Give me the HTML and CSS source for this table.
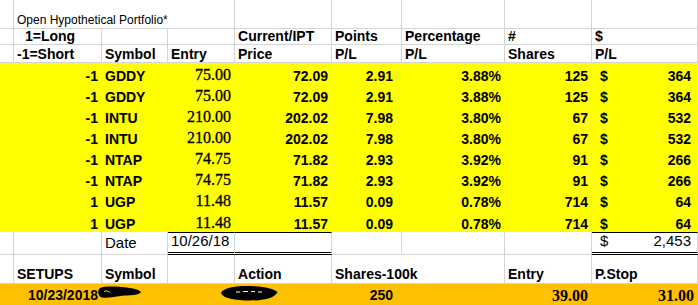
FILE: index.html
```html
<!DOCTYPE html>
<html>
<head>
    <meta charset="UTF-8">
    <title>Open Hypothetical Portfolio</title>
    <link rel="stylesheet" href="styles.css">
</head>
<body>
    <div class="page">
        <table class="sheet">
            <colgroup>
                <col class="c-a"><col class="c-b"><col class="c-c"><col class="c-d"><col class="c-e">
                <col class="c-f"><col class="c-g"><col class="c-h"><col class="c-i">
            </colgroup>
            <tr class="r-title">
                <td></td>
                <td colspan="3" class="title">Open Hypothetical Portfolio*</td>
                <td></td><td></td><td></td><td></td><td></td>
            </tr>
            <tr class="r-head1 hdr">
                <td></td>
                <td class="indent">1=Long</td>
                <td></td><td></td>
                <td>Current/IPT</td>
                <td>Points</td>
                <td>Percentage</td>
                <td>#</td>
                <td>$</td>
            </tr>
            <tr class="r-head2 hdr">
                <td></td>
                <td>-1=Short</td>
                <td>Symbol</td>
                <td>Entry</td>
                <td>Price</td>
                <td>P/L</td>
                <td>P/L</td>
                <td>Shares</td>
                <td>P/L</td>
            </tr>
            <tr class="pos">
                <td></td><td class="num">-1</td><td>GDDY</td><td class="num entry">75.00</td><td class="num">72.09</td>
                <td class="num pts">2.91</td><td class="num">3.88%</td><td class="num">125</td>
                <td class="acct"><span>$</span><span>364</span></td>
            </tr>
            <tr class="pos">
                <td></td><td class="num">-1</td><td>GDDY</td><td class="num entry">75.00</td><td class="num">72.09</td>
                <td class="num pts">2.91</td><td class="num">3.88%</td><td class="num">125</td>
                <td class="acct"><span>$</span><span>364</span></td>
            </tr>
            <tr class="pos">
                <td></td><td class="num">-1</td><td>INTU</td><td class="num entry">210.00</td><td class="num">202.02</td>
                <td class="num pts">7.98</td><td class="num">3.80%</td><td class="num">67</td>
                <td class="acct"><span>$</span><span>532</span></td>
            </tr>
            <tr class="pos">
                <td></td><td class="num">-1</td><td>INTU</td><td class="num entry">210.00</td><td class="num">202.02</td>
                <td class="num pts">7.98</td><td class="num">3.80%</td><td class="num">67</td>
                <td class="acct"><span>$</span><span>532</span></td>
            </tr>
            <tr class="pos">
                <td></td><td class="num">-1</td><td>NTAP</td><td class="num entry">74.75</td><td class="num">71.82</td>
                <td class="num pts">2.93</td><td class="num">3.92%</td><td class="num">91</td>
                <td class="acct"><span>$</span><span>266</span></td>
            </tr>
            <tr class="pos">
                <td></td><td class="num">-1</td><td>NTAP</td><td class="num entry">74.75</td><td class="num">71.82</td>
                <td class="num pts">2.93</td><td class="num">3.92%</td><td class="num">91</td>
                <td class="acct"><span>$</span><span>266</span></td>
            </tr>
            <tr class="pos">
                <td></td><td class="num">1</td><td>UGP</td><td class="num entry">11.48</td><td class="num">11.57</td>
                <td class="num pts">0.09</td><td class="num">0.78%</td><td class="num">714</td>
                <td class="acct"><span>$</span><span>64</span></td>
            </tr>
            <tr class="pos last">
                <td></td><td class="num">1</td><td>UGP</td><td class="num entry">11.48</td><td class="num">11.57</td>
                <td class="num pts">0.09</td><td class="num">0.78%</td><td class="num">714</td>
                <td class="acct"><span>$</span><span>64</span></td>
            </tr>
            <tr class="r-date">
                <td></td><td></td>
                <td class="date-label">Date</td>
                <td class="boxed">10/26/18</td>
                <td class="boxed"></td>
                <td></td><td></td><td></td>
                <td class="boxed acct total"><span>$</span><span>2,453</span></td>
            </tr>
            <tr class="r-setups hdr">
                <td></td>
                <td>SETUPS</td>
                <td>Symbol</td>
                <td></td>
                <td>Action</td>
                <td colspan="2">Shares-100k</td>
                <td>Entry</td>
                <td>P.Stop</td>
            </tr>
            <tr class="setup">
                <td></td>
                <td class="num">10/23/2018</td>
                <td></td><td></td><td></td>
                <td class="num pts">250</td>
                <td></td>
                <td class="num entry">39.00</td>
                <td class="num entry">31.00</td>
            </tr>
        </table>

        <!-- redaction marks over the setup row -->
        <svg class="scribble" width="698" height="24" viewBox="0 283 698 24">
            <path d="M100,288 C106,285.5 118,286.5 127,287.5 C134,288.5 139,289.5 141,292 C140,294.5 133,295.5 124,295.5 C115,296.5 107,298.5 102,297.5 C98,296.5 97,290.5 100,288 Z" fill="#000"/>
            <path d="M104,291.5 C106,290.5 109,291 110,292.5" stroke="#fff" stroke-width="0.8" fill="none"/>
            <path d="M221,293 C223,287.5 236,285.5 250,286 C264,286.5 274,288.5 277.5,292 C275,297.5 266,300.5 250,300.5 C235,300.5 223,298.5 221,293 Z" fill="#000"/>
            <path d="M236,292 L240,292 M243,291.5 L248,291.5 M251,291.5 L255,291.5 M258,292 L262,292" stroke="#fff" stroke-width="1" fill="none"/>
        </svg>
    </div>
</body>
</html>
```

FILE: styles.css
```css
* {
    margin: 0;
    padding: 0;
    box-sizing: border-box;
}

body {
    background: #fff;
    font-family: 'Liberation Sans', Arial, sans-serif;
    color: #000;
}

.page {
    position: relative;
    width: 698px;
    height: 305px;
    overflow: hidden;
}

.sheet {
    border-collapse: separate;
    border-spacing: 0;
    table-layout: fixed;
    width: 698px;
    font-size: 14px;
}

.c-a { width: 14px; }
.c-b { width: 88px; }
.c-c { width: 66px; }
.c-d { width: 67px; }
.c-e { width: 97px; }
.c-f { width: 70px; }
.c-g { width: 103px; }
.c-h { width: 87px; }
.c-i { width: 106px; }

.sheet td {
    border-right: 1px solid #d4d4d4;
    border-bottom: 1px solid #d4d4d4;
    padding: 0 3px 1px 3px;
    vertical-align: bottom;
    white-space: nowrap;
    overflow: visible;
    line-height: 1;
}

.hdr td {
    font-weight: 700;
}

.indent {
    padding-left: 11px !important;
}

.r-title { height: 29px; }
.r-head1 { height: 16px; }
.r-head2 { height: 18px; }
.r-date { height: 22px; }
.r-setups { height: 29px; }
.setup { height: 24px; }

.title {
    font-size: 12px;
    padding-bottom: 2px !important;
}

.r-head1 td { padding-bottom: 1px; }
.r-head2 td { padding-bottom: 1px; }

/* filled rows hide the grid */
.pos td {
    background: #ffff00;
    border-color: transparent;
    font-weight: 700;
    padding-bottom: 0;
}

.pos { height: 21px; }
.pos.last { height: 22px; }

.setup td {
    background: #ffc000;
    border-color: transparent;
    font-weight: 700;
    vertical-align: top;
    padding-top: 4px;
}

.num {
    text-align: right;
}

.pts {
    padding-right: 8px !important;
}

.entry {
    font-family: 'Liberation Serif', 'Times New Roman', serif;
    font-weight: 400 !important;
    font-size: 16px;
    -webkit-text-stroke: 0.3px #000;
}

.setup .entry {
    font-weight: 700 !important;
    -webkit-text-stroke: 0;
}

.acct span {
    display: inline-block;
}

.acct span:first-child {
    padding-left: 5px;
}

.acct span:last-child {
    float: right;
    padding-right: 3px;
}

.date-label {
    font-size: 16px;
    padding-bottom: 4px !important;
}

.r-date td {
    padding-bottom: 4px;
    font-size: 15px;
}

.total {
    font-size: 16px;
}

.boxed {
    border-top: 1px solid #000;
    border-bottom: 3px double #000 !important;
}

.r-setups td {
    padding-bottom: 2px;
}

.scribble {
    position: absolute;
    left: 0;
    top: 283px;
}
```
